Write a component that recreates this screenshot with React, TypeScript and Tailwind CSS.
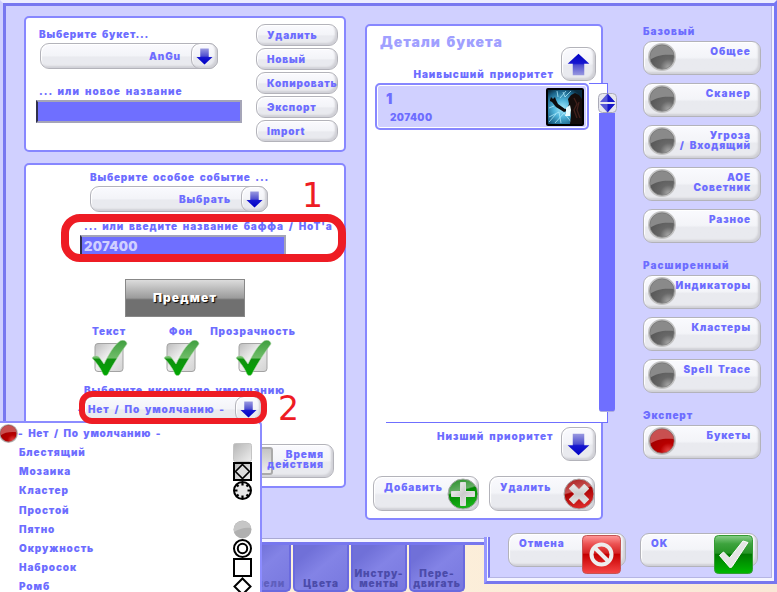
import React from "react";

type Kids = { children?: React.ReactNode; className?: string };

const label = "block whitespace-nowrap text-[10px] leading-[10px] [word-spacing:2px] text-[#6d6dff]";

function Label({ children, className = "" }: Kids) {
  const tracking = className.includes("tracking-") ? "" : "tracking-[0.9px]";
  return <span className={`${label} ${tracking} ${className}`}>{children}</span>;
}

const gloss =
  "border border-[#b3b3ba] rounded-[9px] bg-linear-to-b from-[#fafafe] from-0% via-[#f3f4f8] via-48% to-[#e9eaef] to-55% shadow-[inset_-2px_-2px_2px_#d0d0d6,inset_1px_1px_1px_#ffffff]";

function ArrowIcon({ up = false, size = 18 }: { up?: boolean; size?: number }) {
  return (
    <svg width={size} height={size} viewBox="0 0 18 18">
      <defs>
        <linearGradient id={up ? "arrowUp" : "arrowDown"} x1="0" y1="0" x2="0" y2="1">
          <stop offset="0" stopColor="#9a9ae0" />
          <stop offset="0.48" stopColor="#4e4ecf" />
          <stop offset="0.55" stopColor="#1717d0" />
          <stop offset="1" stopColor="#0000c4" />
        </linearGradient>
      </defs>
      <path
        d="M4.500 0.500h9v9H17.500L9 17.500 0.500 9.500h4z"
        fill={`url(#${up ? "arrowUp" : "arrowDown"})`}
        transform={up ? "rotate(180 9 9)" : undefined}
      />
    </svg>
  );
}

function Select({ children, className = "" }: Kids) {
  return (
    <div className={`flex h-[26px] w-[178px] items-center justify-end ${gloss} ${className}`}>
      <Label className="mr-[10px]">{children}</Label>
      <div className={`-mr-px flex h-[26px] w-[27px] shrink-0 items-center justify-center ${gloss}`}>
        <ArrowIcon size={17} />
      </div>
    </div>
  );
}

function Input({ children, className = "" }: Kids) {
  return (
    <div
      className={`flex h-[23px] w-[206px] items-center border-2 border-[#a5a5b8] border-l-[#30304c] bg-[#6f6fff] pl-[2px] text-[13px] leading-[13px] tracking-[0.3px] text-[#d0d0ff] ${className}`}
    >
      {children}
    </div>
  );
}

function Orb({ red = false, size = 28 }: { red?: boolean; size?: number }) {
  const id = red ? "orbRed" : "orbGray";
  return (
    <svg width={size} height={size} viewBox="0 0 28 28" className="shrink-0">
      <defs>
        <radialGradient id={id} cx="0.75" cy="0.9" r="0.8">
          <stop offset="0" stopColor={red ? "#e84848" : "#a8a8a8"} />
          <stop offset="0.4" stopColor={red ? "#b80000" : "#686868"} />
          <stop offset="1" stopColor={red ? "#a00000" : "#555555"} />
        </radialGradient>
      </defs>
      <circle cx="14" cy="14" r="13" fill={`url(#${id})`} stroke="#c2c2c2" strokeWidth="2" />
      <path d="M2 17C1 8 7 2 14 2s12 5 12 10C17 11 8 12 2 17z" fill={red ? "#c95050" : "#8a8a8a"} />
      <circle cx="14" cy="14" r="12.300" fill="none" stroke={red ? "#8d6060" : "#777"} strokeWidth="0.700" />
    </svg>
  );
}

function NavButton({ children, red = false }: Kids & { red?: boolean }) {
  return (
    <div className={`flex h-[34px] w-[118px] items-start pl-1 ${gloss}`}>
      <div className="mt-px h-7 w-7 shrink-0">
        <Orb red={red} />
      </div>
      <div className="mt-[3.500px] -ml-2 flex flex-1 flex-col items-end pr-[9px]">{children}</div>
    </div>
  );
}

function Check() {
  return (
    <svg width="37" height="37" viewBox="0 0 37 37" className="block">
      <defs>
        <linearGradient id="box" x1="0" y1="0" x2="1" y2="1">
          <stop offset="0" stopColor="#bcbcbc" />
          <stop offset="0.45" stopColor="#eeeeee" />
          <stop offset="1" stopColor="#d2d2d2" />
        </linearGradient>
        <linearGradient id="tick" x1="0" y1="0" x2="0" y2="1">
          <stop offset="0" stopColor="#3f9f3f" />
          <stop offset="0.5" stopColor="#6fbc68" />
          <stop offset="0.54" stopColor="#109010" />
          <stop offset="1" stopColor="#00a800" />
        </linearGradient>
      </defs>
      <rect x="4" y="3.500" width="28" height="28" rx="3" fill="url(#box)" stroke="#a3a3a3" />
      <path
        d="M1 18c1-2 5-3 7-1l5 7C18 14 23 5 29 1c3-2 7 0 7 3C30 12 22 24 17 34c-1 2-4 2-5 0C9 27 5 22 1 18z"
        fill="url(#tick)"
        stroke="#b2d8ac"
        strokeWidth="0.600"
      />
    </svg>
  );
}

function SpellIcon() {
  return (
    <svg width="38" height="38" viewBox="0 0 38 38" className="block">
      <defs>
        <radialGradient id="spell" cx="0.42" cy="0.55" r="0.65">
          <stop offset="0" stopColor="#a8ecff" />
          <stop offset="0.4" stopColor="#4db2d8" />
          <stop offset="0.8" stopColor="#1a6288" />
          <stop offset="1" stopColor="#0a2c40" />
        </radialGradient>
      </defs>
      <rect width="38" height="38" rx="2" fill="#000" />
      <rect x="2" y="2" width="34" height="34" fill="url(#spell)" />
      <path
        d="M3 20l5-2M14 10l6-7M17 4l2 5 6-6M3 29l10-5 2 11M9 35l9-10 8 10M11 3l1 6M3 34l7-8"
        stroke="#b6f0ff"
        strokeWidth="0.900"
        fill="none"
        opacity="0.800"
      />
      <path d="M4 12l1-3 2 2 2-2 1 3 2 4 7 5 3-1-1 3-3 1-8-5-4-5-2-1z" fill="#0d0b0c" />
      <path d="M22 11l3-4 4-2 4 2 3 4v25H24l1-8-1-6-2-3 1-3z" fill="#150d0c" />
      <path d="M20 20l4-3 1 5-1 6h-5l1-3z" fill="#e7fcff" />
      <path d="M28 10l3 6-3 6 3 8M33 14l-2 8 3 8" stroke="#41201c" strokeWidth="1.300" fill="none" />
    </svg>
  );
}

function RoundBadge({ kind }: { kind: "add" | "del" }) {
  const add = kind === "add";
  return (
    <svg width="32" height="34" viewBox="0 0 32 34" className="block">
      <defs>
        <linearGradient id={kind} x1="0" y1="0" x2="0.3" y2="1">
          <stop offset="0" stopColor={add ? "#208b20" : "#a51717"} />
          <stop offset="0.45" stopColor={add ? "#67ae67" : "#c85454"} />
          <stop offset="0.5" stopColor={add ? "#008800" : "#a80000"} />
          <stop offset="1" stopColor={add ? "#18b018" : "#da2828"} />
        </linearGradient>
        <linearGradient id={kind + "Sign"} x1="0" y1="0" x2="1" y2="1">
          <stop offset="0" stopColor="#fff" />
          <stop offset="0.5" stopColor="#cbcbcb" />
          <stop offset="1" stopColor="#f4f4f4" />
        </linearGradient>
      </defs>
      <circle cx="16" cy="17" r="15" fill={`url(#${kind})`} stroke="#aaa" />
      <path
        transform={add ? undefined : "rotate(45 16 17)"}
        d={
          add
            ? "M13.500 5.500h5v9h9v5h-9v9h-5v-9h-9v-5h9z"
            : "M13 6.500h6v7.500h7.500v6H19v7.500h-6V20H5.500v-6H13z"
        }
        fill={`url(#${kind}Sign)`}
        stroke="#ddd"
        strokeLinejoin="round"
      />
    </svg>
  );
}

function ActionButton({ children, kind }: Kids & { kind: "add" | "del" }) {
  return (
    <div className={`flex h-[35px] w-[106px] items-start justify-between pl-[10px] ${gloss}`}>
      <Label className="mt-[4.500px]">{children}</Label>
      <div className="-mr-[1px]">
        <RoundBadge kind={kind} />
      </div>
    </div>
  );
}

function SquareBadge({ ok = false }: { ok?: boolean }) {
  const id = ok ? "sqOk" : "sqNo";
  return (
    <svg width="39" height="39" viewBox="0 0 39 39" className="block">
      <defs>
        <linearGradient id={id} x1="0" y1="0" x2="0" y2="1">
          <stop offset="0" stopColor={ok ? "#89cf89" : "#ff9a9a"} />
          <stop offset="0.22" stopColor={ok ? "#3da33d" : "#ec5353"} />
          <stop offset="0.46" stopColor={ok ? "#269426" : "#d52424"} />
          <stop offset="0.5" stopColor={ok ? "#007a00" : "#c60000"} />
          <stop offset="1" stopColor={ok ? "#00b900" : "#f64646"} />
        </linearGradient>
      </defs>
      <rect x="0.5" y="0.5" width="38" height="38" rx="4" fill={`url(#${id})`} stroke={ok ? "#349b34" : "#c45454"} />
      {ok ? (
        <path d="M5.500 20.500l4-3.500 6 6L29 6l5 1.500L18.500 31c-1 2-3 2-4 0z" fill="#e5e5e5" stroke="#fff" strokeLinejoin="round" />
      ) : (
        <g fill="none" stroke="#ededed" strokeWidth="4">
          <circle cx="19.500" cy="19.500" r="10" />
          <path d="M13 13l13 13" />
        </g>
      )}
    </svg>
  );
}

function FooterButton({ children, ok = false }: Kids & { ok?: boolean }) {
  return (
    <div className={`flex h-[34px] w-[118px] items-start justify-between pl-[10px] pr-1 ${gloss}`}>
      <Label className="mt-[3.500px]">{children}</Label>
      <div className="mt-px">
        <SquareBadge ok={ok} />
      </div>
    </div>
  );
}

function Tab({ children, className = "" }: Kids) {
  return (
    <div
      className={`flex h-[47px] w-[56px] shrink-0 flex-col items-center justify-end rounded-b-[5px] border-x-2 border-b-2 border-[#6a6adf] bg-linear-to-br from-[#7070d8] from-20% via-[#8383e6] via-50% to-[#7878df] pb-[2px] text-[10px] leading-[10px] tracking-[0.9px] text-[#4b4baa] ${className}`}
    >
      {children}
    </div>
  );
}

function MenuIcon({ kind }: { kind: string }) {
  return (
    <svg width="19" height="19" viewBox="0 0 19 19" className="block">
      <defs>
        <linearGradient id="mg" x1="0" y1="0" x2="1" y2="1">
          <stop offset="0" stopColor="#b5b5b5" />
          <stop offset="1" stopColor="#eeeeee" />
        </linearGradient>
      </defs>
      {kind === "shine" && <rect x="0.5" y="0.5" width="18" height="18" rx="2" fill="url(#mg)" stroke="#c4c4c4" />}
      {kind === "mosaic" && (
        <g stroke="#000" strokeWidth="2">
          <rect x="1" y="1" width="17" height="17" fill="url(#mg)" />
          <path d="M9.500 2.500l7 7-7 7-7-7z" fill="#ddd" strokeWidth="1.600" />
        </g>
      )}
      {kind === "cluster" && (
        <g stroke="#000" fill="none">
          <circle cx="9.500" cy="9.500" r="8.500" fill="#e8e8e8" strokeWidth="2" />
          <path d="M9.500 1v3.500M9.500 14.500V18M1 9.500h3.500M14.500 9.500H18M3.500 3.500l2 2M13.500 13.500l2 2M3.500 15.500l2-2M13.500 5.500l2-2" strokeWidth="2.200" />
        </g>
      )}
      {kind === "spot" && (
        <g>
          <circle cx="9.500" cy="9.500" r="9" fill="#b0b0b0" />
          <path d="M1 12C0 5 4 1 9.500 1c5 0 8 3 8.500 7C12 7 6 9 1 12z" fill="#c6c6c6" />
        </g>
      )}
      {kind === "ring" && (
        <g stroke="#000" fill="none" strokeWidth="2">
          <circle cx="9.500" cy="9.500" r="8.500" />
          <circle cx="9.500" cy="9.500" r="4.700" />
        </g>
      )}
      {kind === "outline" && <rect x="1" y="1" width="17" height="17" fill="#fff" stroke="#000" strokeWidth="2" />}
      {kind === "diamond" && <path d="M9.500 1.500l8 8-8 8-8-8z" fill="#fff" stroke="#000" strokeWidth="2" />}
    </svg>
  );
}

const menu: [string, string][] = [
  ["Блестящий", "shine"],
  ["Мозаика", "mosaic"],
  ["Кластер", "cluster"],
  ["Простой", "none"],
  ["Пятно", "spot"],
  ["Окружность", "ring"],
  ["Набросок", "outline"],
  ["Ромб", "diamond"],
];

const panel = "rounded-[5px] border-2 border-[#8787ff] bg-white";

function BouquetPanel() {
  return (
    <section className={`flex h-[136px] w-[322px] justify-between pr-[6px] pl-[10px] ${panel}`}>
      <div className="flex flex-col pt-[10.500px]">
        <Label className="ml-[3px] tracking-[0.8px]">Выберите букет...</Label>
        <Select className="mt-[4.500px] ml-[4px]">AnGu</Select>
        <Label className="mt-[17px] ml-[3px] tracking-[1px]">... или новое название</Label>
        <Input className="mt-[4px]" />
      </div>
      <div className="flex flex-col gap-[2px] pt-[6px]">
        {["Удалить", "Новый", "Копировать", "Экспорт", "Import"].map((t) => (
          <div key={t} className={`flex h-[22px] w-[82px] items-center pl-[10px] ${gloss}`}>
            <Label className="tracking-[0.8px]">{t}</Label>
          </div>
        ))}
      </div>
    </section>
  );
}

function EventPanel() {
  return (
    <section className={`mt-[11px] flex h-[325px] w-[322px] flex-col items-start ${panel}`}>
      <Label className="mt-[7px] ml-[64px] tracking-[0.8px]">Выберите особое событие ...</Label>
      <Select className="mt-[4px] ml-[64px]">Выбрать</Select>
      <Label className="mt-[9px] ml-[58px]">... или введите название баффа / HoT'a</Label>
      <Input className="mt-[4px] ml-[54px]">207400</Input>
      <div className="mt-[21px] ml-[99px] flex h-[38px] w-[120px] items-center justify-center border border-[#888] bg-linear-to-b from-[#dcdcdc] from-0% via-[#9b9b9b] via-50% to-[#707070] to-55% text-[12px] leading-[12px] tracking-[1.1px] text-white [text-shadow:1px_1px_1px_#000]">
        Предмет
      </div>
      <div className="mt-[9px] ml-[47px] grid grid-cols-[72px_72px_72px]">
        {["Текст", "Фон", "Прозрачность"].map((t) => (
          <div key={t} className="flex flex-col items-center">
            <Label>{t}</Label>
            <div className="mt-[4px]">
              <Check />
            </div>
          </div>
        ))}
      </div>
      <Label className="mt-[8px] ml-[58px]">Выберите иконку по умолчанию</Label>
      <Select className="mt-px ml-[58px]">- Нет / По умолчанию -</Select>
      <div className={`mt-[22px] ml-[190px] flex h-[34px] w-[118px] items-start pl-[28px] ${gloss}`}>
        <div className="mt-[2px] h-[28px] w-[28px] shrink-0 rounded-[3px] border-2 border-[#aaa] bg-linear-to-b from-[#c5c5c5] to-[#eeeeee]" />
        <div className="mt-[3.500px] -ml-2 flex flex-1 flex-col items-end pr-[9px]">
          <Label>Время</Label>
          <Label>действия</Label>
        </div>
      </div>
    </section>
  );
}

function DetailsPanel() {
  return (
    <section className={`mt-[24px] ml-[19px] flex h-[496px] w-[238px] flex-col pl-[6px] ${panel}`}>
      <div className="flex h-[57px]">
        <div className="flex w-[180px] shrink-0 flex-col items-end">
          <span className="mt-[9px] mr-auto ml-[7px] whitespace-nowrap text-[14px] leading-[14px] tracking-[1px] text-[#a0a0ff] [word-spacing:2px]">
            Детали букета
          </span>
          <Label className="mt-[20px] -mr-px tracking-[1px]">Наивысший приоритет</Label>
        </div>
        <div className={`mt-[21px] ml-[8px] flex h-[34px] w-[35px] items-center justify-center ${gloss}`}>
          <ArrowIcon up size={23} />
        </div>
      </div>
      <div className="flex h-[340px] w-[243px] shrink-0">
        <div className="flex h-[340px] w-[235px] shrink-0 border-r border-b border-[#6f6fff] bg-white [border-image:linear-gradient(to_right,transparent_14px,#6f6fff_14px)_1]">
          <div className="ml-[2px] flex h-[47px] w-[214px] items-start justify-between rounded-[5px] border-2 border-[#8787ff] bg-[#d0d0ff] pr-[3px] pl-[9px] shadow-[inset_0_0_0_1px_#ffffff]">
            <div className="flex flex-col text-[#6d6dff]">
              <span className="mt-[7px] text-[14px] leading-[14px]">1</span>
              <Label className="mt-[6px] ml-[4px] tracking-[0.4px]">207400</Label>
            </div>
            <div className="mt-[3px]">
              <SpellIcon />
            </div>
          </div>
          <div className="h-px flex-1 bg-[#6f6fff]" />
        </div>
        <div className="z-10 -ml-[9px] flex w-[17px] shrink-0 flex-col items-center pt-[10px]">
          <svg width="19" height="20" viewBox="0 0 19 20" className="-ml-px shrink-0">
            <rect x="0.5" y="0.5" width="18" height="19" rx="4" fill="#e6e6ee" stroke="#aaaab8" />
            <path d="M9.500 0.500L17 9H2zM9.500 19.500L17 11H2z" fill="#5656d8" />
            <path d="M9.500 0.500L17 9H9.500zM9.500 19.500L17 11H9.500z" fill="#1717c8" />
          </svg>
          <div className="-ml-px h-[299px] w-[16px] rounded-b-[3px] border-b border-[#aeaedd] bg-[#6f6fff]" />
        </div>
      </div>
      <div className="flex justify-between pr-[5px]">
        <Label className="mt-[7.500px] ml-[64px] tracking-[1px]">Низший приоритет</Label>
        <div className={`mt-[4px] flex h-[34px] w-[35px] items-center justify-center ${gloss}`}>
          <ArrowIcon size={23} />
        </div>
      </div>
      <div className="mt-[15px] flex gap-[10px]">
        <ActionButton kind="add">Добавить</ActionButton>
        <ActionButton kind="del">Удалить</ActionButton>
      </div>
    </section>
  );
}

function NavColumn() {
  return (
    <nav className="mt-[26px] ml-[40px] flex w-[118px] flex-col gap-[8px]">
      <Label className="-mb-[3px] tracking-[1px]">Базовый</Label>
      <NavButton><Label className="tracking-[1.1px]">Общее</Label></NavButton>
      <NavButton><Label className="tracking-[1.1px]">Сканер</Label></NavButton>
      <NavButton>
        <Label className="leading-[9px]">Угроза</Label>
        <Label className="leading-[9px]">/ Входящий</Label>
      </NavButton>
      <NavButton>
        <Label className="leading-[9px]">АОЕ</Label>
        <Label className="leading-[9px]">Советник</Label>
      </NavButton>
      <NavButton><Label>Разное</Label></NavButton>
      <Label className="mt-[9px] -mb-[3px] tracking-[1.1px]">Расширенный</Label>
      <NavButton><Label>Индикаторы</Label></NavButton>
      <NavButton><Label>Кластеры</Label></NavButton>
      <NavButton><Label>Spell Trace</Label></NavButton>
      <Label className="mt-[9px] -mb-[3px]">Эксперт</Label>
      <NavButton red><Label>Букеты</Label></NavButton>
    </nav>
  );
}

export default function App() {
  return (
    <div className="relative h-[592px] w-[777px] overflow-hidden bg-linear-to-r from-[#fff7df] to-[#f9e8d6] font-['Inter','Liberation_Sans',sans-serif] font-black">
      <main className="flex h-[538px] border-t-[3px] border-r-[3px] border-l-[3px] border-t-[#eeeeff] border-r-[#7777f4] border-l-[#cfcfff] bg-[#d0d0ff]">
        <div className="flex h-[535px] w-full border-t-[3px] border-l-[3px] border-[#7878f0] shadow-[inset_-2px_0_0_#f2f2ff,inset_-3px_0_0_#b5b5e4]">
          <div className="-mt-[6px] ml-[18px] flex">
            <div className="flex flex-col pt-[16px]">
              <BouquetPanel />
              <EventPanel />
            </div>
            <DetailsPanel />
            <NavColumn />
          </div>
        </div>
      </main>
      <footer className="flex">
        <div className="w-[484px]">
          <div className="h-[7px] border-t border-b-[3px] border-t-[#a9a9d4] border-b-[#7777ee] bg-[#f4f4ff]" />
          <div className="flex gap-[2px] pl-[235px]">
            <Tab><span className="text-[#5f5fbd]">Панели</span></Tab>
            <Tab>Цвета</Tab>
            <Tab><span>Инстру-</span><span>менты</span></Tab>
            <Tab><span>Пере-</span><span>двигать</span></Tab>
          </div>
        </div>
        <div className="-mt-px h-[47px] w-[293px] border-r-[3px] border-b-[3px] border-l-[3px] border-r-[#7777f4] border-b-[#7777ee] border-l-[#9696ff] bg-[#f4f4ff] pr-[2px] pb-[3px] pl-[1px]">
          <div className="flex h-[41px] gap-[14px] border-r border-b border-l-2 border-r-[#b5b5e4] border-b-[#b5b5e4] border-l-[#7777ee] bg-[#d0d0ff] pl-[18px]">
            <div className="-mt-[4px]"><FooterButton>Отмена</FooterButton></div>
            <div className="-mt-[4px]"><FooterButton ok>OK</FooterButton></div>
          </div>
        </div>
      </footer>

      <div className="absolute top-[421px] left-0 h-[180px] w-[262px] rounded-tr-[4px] border-t-2 border-r-2 border-[#8c8cff] bg-white">
        <div className="mt-[1px] flex h-[19px] items-center">
          <div className="-ml-px"><Orb red size={19} /></div>
          <Label className="-mt-px tracking-[0.7px]">- Нет / По умолчанию -</Label>
        </div>
        {menu.map(([name, icon]) => (
          <div key={name} className="flex h-[19.200px] items-center justify-between pr-[8px] pl-[19px]">
            <Label className="-mt-px">{name}</Label>
            <MenuIcon kind={icon} />
          </div>
        ))}
      </div>

      <div className="absolute top-[214px] left-[61px] h-[48px] w-[285px] rounded-[19px] border-8 border-[#ee1c24]" />
      <div className="absolute top-[391px] left-[79px] h-[33px] w-[188px] rounded-[13px] border-[6px] border-[#ee1c24]" />
      <span className="absolute top-[179px] left-[302px] font-['DejaVu_Sans',sans-serif] text-[33px] leading-[34px] font-normal text-[#ee1c24]">1</span>
      <span className="absolute top-[392px] left-[278px] font-['DejaVu_Sans',sans-serif] text-[33px] leading-[34px] font-normal text-[#ee1c24]">2</span>
    </div>
  );
}
